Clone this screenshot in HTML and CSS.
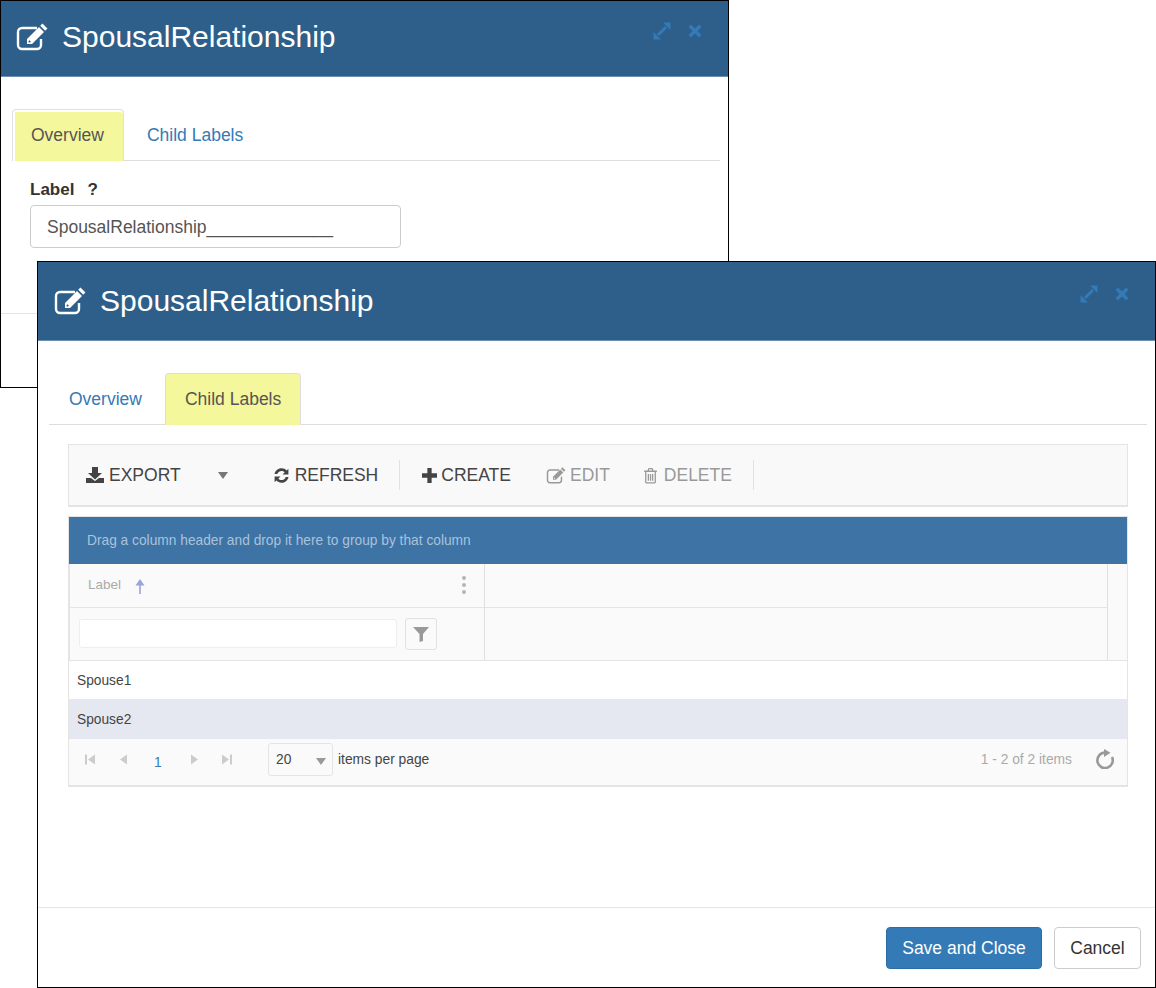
FILE: index.html
```html
<!DOCTYPE html>
<html lang="en">

<head>
    <meta charset="UTF-8">
    <title>SpousalRelationship</title>
    <link rel="stylesheet" href="styles.css">
</head>

<body>
    <svg class="sprite" width="0" height="0">
        <symbol id="i-edit" viewBox="0 0 32 28">
            <path d="M25 16v6a4 4 0 0 1-4 4H6a4 4 0 0 1-4-4V9a4 4 0 0 1 4-4h15" fill="none" stroke="currentColor" stroke-width="2.400"/>
            <path fill-rule="evenodd" d="M26.500.5L31.500 5.500 29.200 7.800 24.200 2.800zM23 4L28 9 16 21H11V16zM13.500 17.200L12.600 18.100V19.400H14L14.800 18.500z" fill="currentColor"/>
        </symbol>
        <symbol id="i-expand" viewBox="0 0 18 18">
            <path d="M17.500.5V8L10 .5zM.5 17.500V10L8 17.500z" fill="currentColor"/>
            <path d="M13 5L5 13" fill="none" stroke="currentColor" stroke-width="3"/>
        </symbol>
        <symbol id="i-close" viewBox="0 0 14 14">
            <path d="M3 .5L7 4.500 11 .5 13.500 3 9.500 7 13.500 11 11 13.500 7 9.500 3 13.500 .5 11 4.500 7 .5 3z" fill="currentColor"/>
        </symbol>
        <symbol id="i-download" viewBox="0 0 18 16">
            <path d="M6 0h6v6h4l-7 6.500L2 6h4zM0 11h5l4 3 4-3h5v5H0z" fill="currentColor"/>
        </symbol>
        <symbol id="i-refresh" viewBox="0 0 16 16">
            <path d="M8 1.200c2 0 3.700.8 4.900 2L14.500 1.600V7H9l2-2c-.8-.8-1.900-1.300-3-1.300-1.900 0-3.500 1.200-4 3H1.400C2 3.600 4.700 1.200 8 1.200zM1.500 9H7l-2 2c.8.8 1.900 1.300 3 1.300 1.900 0 3.500-1.200 4-3h2.600c-.6 3.100-3.300 5.500-6.600 5.500-2 0-3.700-.8-4.900-2L1.500 14.400z" fill="currentColor"/>
        </symbol>
        <symbol id="i-plus" viewBox="0 0 14 14">
            <path d="M5 0h4v5h5v4H9v5H5V9H0V5h5z" fill="currentColor"/>
        </symbol>
        <symbol id="i-trash" viewBox="0 0 14 16">
            <path d="M1 4h12M2.500 4v10a1 1 0 0 0 1 1h7a1 1 0 0 0 1-1V4M4.500 4l1-2.500h3l1 2.500M5 6.500V13M7 6.500V13M9 6.500V13" fill="none" stroke="currentColor" stroke-width="1.200"/>
        </symbol>
        <symbol id="i-filter" viewBox="0 0 16 16">
            <path d="M0 1h16L10 8v7l-3.500 1V8z" fill="currentColor"/>
        </symbol>
        <symbol id="i-reload" viewBox="0 0 18 20">
            <path d="M9 3.600A7.700 7.700 0 1 0 16 8" fill="none" stroke="currentColor" stroke-width="2.600"/>
            <path d="M8 0L14.500 3.800 8 8z" fill="currentColor"/>
        </symbol>
    </svg>

    <!-- window behind -->
    <div class="window window-back">
        <div class="win-head head-back">
            <svg class="head-icon"><use href="#i-edit"/></svg>
            <span class="win-title">SpousalRelationship</span>
            <div class="win-actions">
                <svg class="act-expand"><use href="#i-expand"/></svg>
                <svg class="act-close"><use href="#i-close"/></svg>
            </div>
        </div>
        <div class="win-body body-back">
            <ul class="tabs">
                <li class="tab tab-active tab-shadow">Overview</li>
                <li class="tab">Child Labels</li>
            </ul>
            <div class="field">
                <label class="field-label">Label<span class="field-help">?</span></label>
                <div class="field-input">SpousalRelationship_____________</div>
            </div>
        </div>
        <div class="back-foot"></div>
    </div>

    <!-- window in front -->
    <div class="window window-front">
        <div class="win-head head-front">
            <svg class="head-icon"><use href="#i-edit"/></svg>
            <span class="win-title">SpousalRelationship</span>
            <div class="win-actions">
                <svg class="act-expand"><use href="#i-expand"/></svg>
                <svg class="act-close"><use href="#i-close"/></svg>
            </div>
        </div>
        <div class="win-body body-front">
            <ul class="tabs tabs-front">
                <li class="tab">Overview</li>
                <li class="tab tab-active">Child Labels</li>
            </ul>

            <div class="toolbar">
                <span class="tool tool-export"><svg class="ic-download"><use href="#i-download"/></svg>EXPORT</span>
                <span class="caret caret-export"></span>
                <span class="tool tool-refresh"><svg class="ic-refresh"><use href="#i-refresh"/></svg>REFRESH</span>
                <span class="tool-sep"></span>
                <span class="tool tool-create"><svg class="ic-plus"><use href="#i-plus"/></svg>CREATE</span>
                <span class="tool tool-off tool-edit"><svg class="ic-edit"><use href="#i-edit"/></svg>EDIT</span>
                <span class="tool tool-off tool-delete"><svg class="ic-trash"><use href="#i-trash"/></svg>DELETE</span>
                <span class="tool-sep"></span>
            </div>

            <div class="grid">
                <div class="group-bar">Drag a column header and drop it here to group by that column</div>
                <div class="grid-head">
                    <div class="col-main">
                        <div class="head-cell">
                            <span class="col-title">Label</span>
                            <svg class="sort-arrow" viewBox="0 0 10 15"><path d="M5 0l4.500 6.500H5.800V15H4.200V6.500H.5z" fill="currentColor"/></svg>
                            <span class="col-menu"><i></i><i></i><i></i></span>
                        </div>
                        <div class="filter-cell">
                            <div class="filter-input"></div>
                            <div class="filter-btn"><svg class="ic-filter"><use href="#i-filter"/></svg></div>
                        </div>
                    </div>
                    <div class="col-rest">
                        <div class="rest-top"></div>
                        <div class="rest-bottom"></div>
                    </div>
                    <div class="col-scroll"></div>
                </div>
                <div class="grid-row">Spouse1</div>
                <div class="grid-row row-selected">Spouse2</div>
                <div class="pager">
                    <div class="pager-nav">
                        <svg class="nav-arrow" viewBox="0 0 10 10"><path d="M0 0h2v10H0zM10 0v10L3 5z" fill="currentColor"/></svg>
                        <svg class="nav-arrow" viewBox="0 0 10 10"><path d="M9 0v10L2 5z" fill="currentColor"/></svg>
                        <span class="page-num">1</span>
                        <svg class="nav-arrow" viewBox="0 0 10 10"><path d="M1 0v10l7-5z" fill="currentColor"/></svg>
                        <svg class="nav-arrow" viewBox="0 0 10 10"><path d="M0 0v10l7-5zM8 0h2v10H8z" fill="currentColor"/></svg>
                    </div>
                    <div class="page-size"><span>20</span><span class="caret caret-size"></span></div>
                    <span class="per-page">items per page</span>
                    <span class="page-info">1 - 2 of 2 items</span>
                    <svg class="ic-reload"><use href="#i-reload"/></svg>
                </div>
            </div>
        </div>
        <div class="win-foot">
            <button class="btn btn-primary">Save and Close</button>
            <button class="btn btn-default">Cancel</button>
        </div>
    </div>
</body>

</html>
```

FILE: styles.css
```css
html, body {
    margin: 0;
    padding: 0;
}

body {
    width: 1156px;
    height: 988px;
    overflow: hidden;
    position: relative;
    background-color: #fff;
    font-family: "Liberation Sans", Arial, sans-serif;
    color: #333;
}

.sprite {
    position: absolute;
}

svg {
    display: block;
    flex: none;
}

/* windows sit on a free canvas */
.window {
    position: absolute;
    box-sizing: border-box;
    border: 1px solid #000;
    background-color: #fff;
    display: flex;
    flex-direction: column;
}

.window-back {
    left: 0;
    top: 0;
    width: 729px;
    height: 388px;
}

.window-front {
    left: 37px;
    top: 261px;
    width: 1119px;
    height: 727px;
}

.win-head {
    box-sizing: border-box;
    display: flex;
    align-items: center;
    background-color: #2d5f8a;
    border-bottom: 1px solid #6d8fb0;
    color: #fff;
    flex: none;
}

.head-back {
    height: 76px;
    padding: 0 0 3px 15px;
}

.head-front {
    height: 79px;
    padding: 0 0 1px 16px;
}

.head-icon {
    width: 32px;
    height: 28px;
    margin-right: 14px;
}

.win-title {
    font-size: 30px;
    flex: 1;
}

.win-actions {
    display: flex;
    align-items: center;
    gap: 17px;
    color: #337ab7;
    margin-top: -12px;
    padding-right: 26px;
}

.act-expand {
    width: 18px;
    height: 18px;
}

.act-close {
    width: 14px;
    height: 14px;
}

.head-front .win-actions {
    margin-top: -14px;
}

.win-body {
    flex: 1;
}

.body-back {
    padding: 32px 8px 0 11px;
}

.body-front {
    padding: 32px 8px 0 11px;
}

.tabs {
    list-style: none;
    display: flex;
    margin: 0;
    padding: 0;
    height: 51px;
    border-bottom: 1px solid #ddd;
    font-size: 17.5px;
}

.tab {
    box-sizing: border-box;
    height: 51px;
    line-height: 52px;
    padding: 0 23px;
    color: #337ab7;
}

.tab-active {
    height: 52px;
    line-height: 50px;
    padding: 0 19px;
    border: 1px solid #ddd;
    border-bottom: none;
    border-radius: 4px 4px 0 0;
    background-color: #f5f79c;
    color: #555;
    background-clip: padding-box;
}

.tab-shadow {
    border-color: #e0e0e0;
    box-shadow: inset 0 2px 0 #fff, inset 2px 0 0 #fff;
    padding: 0 19px 0 18px;
}

.tabs-front .tab:first-child {
    padding: 0 23px 0 20px;
}

.field {
    padding: 20px 0 0 18px;
}

.field-label {
    display: block;
    font-size: 17px;
    font-weight: bold;
    line-height: 18px;
    margin-bottom: 6px;
}

.field-help {
    margin-left: 13px;
}

.field-input {
    box-sizing: border-box;
    width: 371px;
    height: 43px;
    line-height: 43px;
    padding-left: 16px;
    border: 1px solid #ccc;
    border-radius: 4px;
    font-size: 17.5px;
    color: #555;
}

.back-foot {
    height: 73px;
    border-top: 1px solid #e5e5e5;
    flex: none;
}

/* toolbar */
.toolbar {
    box-sizing: border-box;
    display: flex;
    align-items: center;
    height: 63px;
    margin: 19px 0 0 19px;
    width: 1060px;
    border: 1px solid #e4e4e4;
    border-bottom-width: 2px;
    background-color: #f9f9f9;
    font-size: 17.5px;
    color: #444;
}

.tool {
    display: flex;
    align-items: center;
}

.tool-export {
    margin-left: 17px;
}

.ic-download {
    width: 18px;
    height: 16px;
    margin-right: 5px;
}

.caret {
    width: 0;
    height: 0;
    border-left: 5px solid transparent;
    border-right: 5px solid transparent;
    border-top: 7px solid #777;
}

.caret-export {
    margin-left: 37px;
}

.tool-refresh {
    margin-left: 45px;
}

.ic-refresh {
    width: 17px;
    height: 17px;
    margin-right: 5px;
}

.tool-sep {
    width: 1px;
    height: 30px;
    background-color: #e2e2e2;
    margin-left: 21px;
}

.tool-create {
    margin-left: 22px;
}

.ic-plus {
    width: 15px;
    height: 15px;
    margin-right: 4px;
}

.tool-off {
    color: #999;
}

.tool-edit {
    margin-left: 35px;
}

.ic-edit {
    width: 20px;
    height: 17px;
    margin-right: 4px;
}

.tool-delete {
    margin-left: 33px;
}

.ic-trash {
    width: 15px;
    height: 17px;
    margin-right: 6px;
}

/* grid */
.grid {
    box-sizing: border-box;
    width: 1060px;
    margin: 9px 0 0 19px;
    border: 1px solid #e4e4e4;
    border-bottom-width: 2px;
    background-color: #fafafa;
}

.group-bar {
    height: 47px;
    line-height: 48px;
    padding-left: 18px;
    background-color: #3e73a6;
    color: #a9c2da;
    font-size: 13.75px;
}

.grid-head {
    display: flex;
    height: 96px;
    border-bottom: 1px solid #e4e4e4;
}

.col-main {
    box-sizing: border-box;
    width: 416px;
    border-left: 1px solid #e4e4e4;
    border-right: 1px solid #e0e0e0;
}

.head-cell {
    box-sizing: border-box;
    display: flex;
    align-items: center;
    height: 44px;
    border-bottom: 1px solid #e4e4e4;
    padding: 0 0 2px 18px;
    font-size: 13.5px;
}

.col-title {
    color: #aaa;
}

.sort-arrow {
    width: 10px;
    height: 15px;
    margin: 3px 0 0 14px;
    color: #98a4dc;
}

.col-menu {
    margin-left: auto;
    margin-right: 18px;
    display: flex;
    flex-direction: column;
    gap: 3px;
}

.col-menu i {
    display: block;
    width: 4px;
    height: 4px;
    border-radius: 50%;
    background-color: #b5b5b5;
}

.filter-cell {
    box-sizing: border-box;
    display: flex;
    align-items: center;
    height: 51px;
    padding: 0 0 0 9px;
}

.filter-input {
    box-sizing: border-box;
    width: 318px;
    height: 29px;
    background-color: #fff;
    border: 1px solid #eee;
    border-radius: 3px;
}

.filter-btn {
    box-sizing: border-box;
    display: flex;
    align-items: center;
    justify-content: center;
    width: 32px;
    height: 32px;
    margin-left: 8px;
    border: 1px solid #e2e2e2;
    border-radius: 3px;
}

.ic-filter {
    width: 16px;
    height: 16px;
    color: #999;
}

.col-rest {
    flex: 1;
    border-right: 1px solid #e0e0e0;
}

.rest-top {
    height: 43px;
    border-bottom: 1px solid #e4e4e4;
}

.col-scroll {
    width: 19px;
}

.grid-row {
    height: 38px;
    line-height: 40px;
    padding-left: 8px;
    background-color: #fff;
    font-size: 13.75px;
    color: #444;
}

.row-selected {
    height: 40px;
    line-height: 42px;
    background-color: #e5e8f1;
}

.pager {
    box-sizing: border-box;
    display: flex;
    align-items: center;
    height: 46px;
    padding-bottom: 5px;
    background-color: #fafafa;
    font-size: 13.8px;
}

.pager-nav {
    display: flex;
    align-items: center;
    width: 199px;
    color: #ccc;
    padding-left: 16px;
    box-sizing: border-box;
}

.nav-arrow {
    width: 10px;
    height: 11px;
    margin-right: 22px;
}

.pager-nav .nav-arrow:first-child {
    margin-right: 23px;
}

.page-num {
    width: 14px;
    margin: 6px 22px 0 4px;
    color: #337ab7;
}

.page-size {
    box-sizing: border-box;
    display: flex;
    align-items: center;
    justify-content: space-between;
    width: 65px;
    height: 33px;
    padding: 0 6px 0 7px;
    border: 1px solid #e4e4e4;
    border-radius: 3px;
    color: #444;
}

.caret-size {
    border-top-color: #999;
    margin-top: 4px;
}

.per-page {
    margin-left: 5px;
    color: #444;
}

.page-info {
    margin-left: auto;
    color: #aaa;
}

.ic-reload {
    width: 18px;
    height: 20px;
    margin: 0 13px 2px 24px;
    color: #999;
}

/* footer */
.win-foot {
    flex: none;
    box-sizing: border-box;
    height: 80px;
    border-top: 1px solid #e5e5e5;
    display: flex;
    justify-content: flex-end;
    align-items: flex-start;
    gap: 12px;
    padding: 19px 14px 0 0;
}

.btn {
    box-sizing: border-box;
    height: 42px;
    border-radius: 4px;
    font-family: inherit;
    font-size: 17.5px;
    padding: 0;
}

.btn-primary {
    width: 156px;
    border: 1px solid #2e6da4;
    background-color: #337ab7;
    color: #fff;
}

.btn-default {
    width: 87px;
    border: 1px solid #ccc;
    background-color: #fff;
    color: #333;
}
```
